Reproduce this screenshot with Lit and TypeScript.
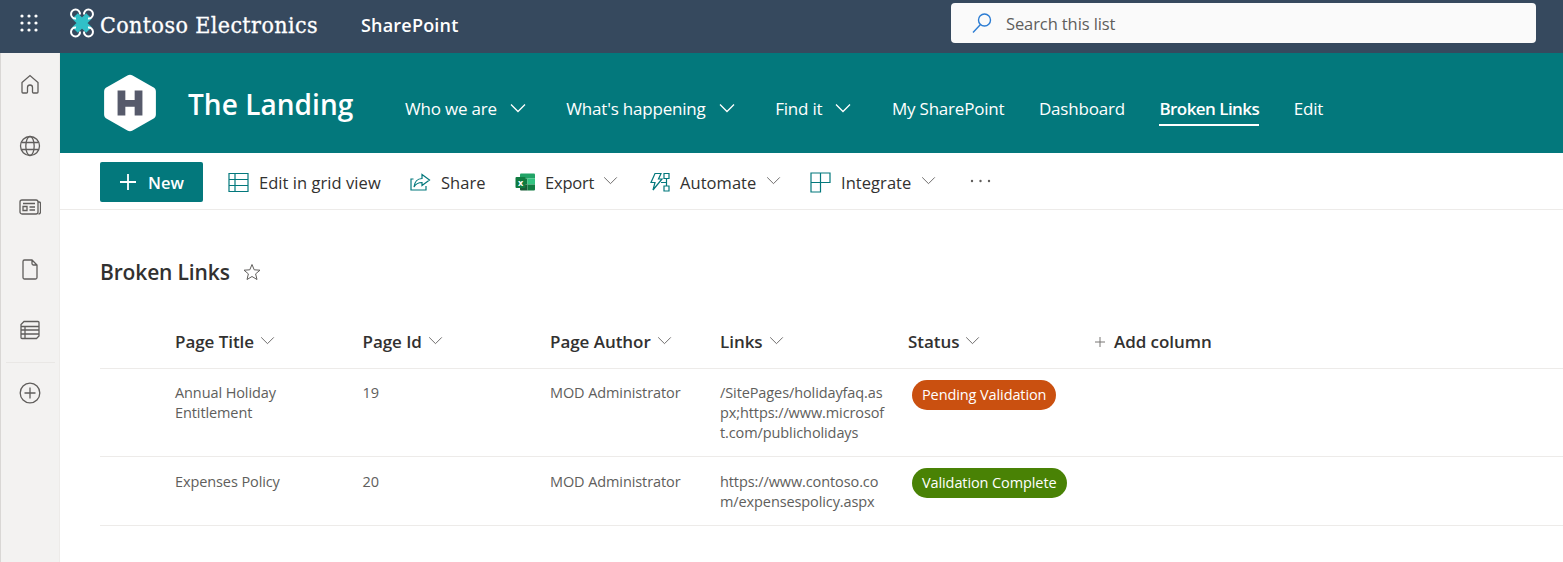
import { LitElement, css, html, svg } from 'lit';
import { customElement } from 'lit/decorators.js';

const chevron = html`<svg class="chev" viewBox="0 0 16 10"><path d="M1 1.5l7 7 7-7" fill="none" stroke="currentColor" stroke-width="1"/></svg>`;

const railIcons = [
  svg`<path d="M3 9.5L11 2.5l8 7V19a1 1 0 0 1-1 1h-3.5a1 1 0 0 1-1-1v-4.500a2.500 2.500 0 0 0-5 0V19a1 1 0 0 1-1 1H4a1 1 0 0 1-1-1z"/>`,
  svg`<circle cx="11" cy="11" r="9.500"/><ellipse cx="11" cy="11" rx="4.200" ry="9.500"/><path d="M2.400 7.500h17.200M2.400 14.500h17.200"/>`,
  svg`<rect x="1" y="4" width="18" height="14" rx="2"/><path d="M19 6h1a1.500 1.500 0 0 1 1.500 1.500V16a2 2 0 0 1-2 2M4 7.500h12M4 10.500h4v4H4zM10.500 11H16M10.500 14H16"/>`,
  svg`<path d="M5.500 2h7.500l5 5v12.500a1.500 1.500 0 0 1-1.500 1.500h-11A1.500 1.500 0 0 1 4 19.500V3.500A1.500 1.500 0 0 1 5.500 2zM13 2v3.500A1.500 1.500 0 0 0 14.500 7H18"/>`,
  svg`<path d="M5 2.500h14a1 1 0 0 1 1 1V17l-2.500 2.500H3a1 1 0 0 1-1-1V5.500zM2 7.500h18M2 11h18M2 15h18M6 7.500v12"/>`,
];

const table = [
  { title: 'Annual Holiday Entitlement', id: '19', author: 'MOD Administrator', links: '/SitePages/holidayfaq.aspx;https://www.microsoft.com/publicholidays', status: 'Pending Validation', tone: 'pending' },
  { title: 'Expenses Policy', id: '20', author: 'MOD Administrator', links: 'https://www.contoso.com/expensespolicy.aspx', status: 'Validation Complete', tone: 'complete' },
];

@customElement('app-root')
export class AppRoot extends LitElement {
  static styles = css`
    :host {
      display: block;
      width: 1563px;
      height: 562px;
      overflow: hidden;
      background: #fff;
      font-family: 'Open Sans', 'Noto Sans', sans-serif;
      color: #323130;
    }
    svg { display: block; flex: none; }
    .suite {
      height: 53px;
      box-sizing: border-box;
      padding-bottom: 7px;
      background: #36495e;
      display: flex;
      align-items: center;
      color: #fff;
    }
    .waffle { width: 18px; height: 18px; margin-left: 20px; fill: #fff; }
    .drone { width: 28px; height: 32px; margin-left: 30px; }
    .brand {
      font-family: 'DejaVu Serif Condensed', 'DejaVu Serif', serif;
      font-size: 23px;
      letter-spacing: 0.4px;
      margin: 3px 0 0 4px;
      width: 261px;
      white-space: nowrap;
      -webkit-text-stroke: 0.3px #fff;
    }
    .app { font-size: 18px; font-weight: 600; letter-spacing: 0.2px; width: 590px; margin-top: 3px; }
    .search {
      width: 585px;
      height: 40px;
      box-sizing: border-box;
      background: #fafafa;
      border-radius: 4px;
      display: flex;
      align-items: center;
      padding-left: 20px;
      gap: 13px;
      font-size: 16.5px;
      letter-spacing: -0.1px;
      color: #605e5c;
    }
    .search svg { width: 22px; height: 22px; }
    .body { display: flex; height: 509px; }
    .rail {
      width: 60px;
      box-sizing: border-box;
      background: #f3f2f1;
      border-left: 1px solid #d9d7d5;
      border-right: 1px solid #edebe9;
      display: flex;
      flex-direction: column;
      align-items: center;
      padding-top: 20px;
      flex: none;
    }
    .rail-item { height: 61.500px; }
    .rail-item svg, .rail-add svg {
      width: 22px;
      height: 22px;
      fill: none;
      stroke: #605e5c;
      stroke-width: 1.300;
    }
    .rail-sep { width: 49px; height: 1px; background: #e9e7e5; margin-top: -19px; }
    .rail-add { margin-top: 19px; }
    .main { flex: 1; min-width: 0; }
    .site {
      height: 100px;
      background: #03787c;
      color: #fff;
      display: flex;
      align-items: center;
      padding-left: 44px;
    }
    .hex { width: 52px; height: 58px; }
    .site-title {
      font-size: 28px;
      font-weight: 600;
      margin: 2px 0 0 32px;
      width: 217px;
      letter-spacing: 0.05px;
      white-space: nowrap;
    }
    .nav { display: flex; align-items: center; gap: 34.500px; font-size: 17px; letter-spacing: -0.2px; margin-top: 10px; }
    .nav-item { display: flex; align-items: center; gap: 12px; height: 36px; white-space: nowrap; box-sizing: border-box; }
    .nav-item .chev { width: 18px; height: 10px; margin-right: 5px; }
    .nav-item .chev path { stroke-width: 1.300; }
    .nav-item.active { font-weight: 600; letter-spacing: -0.55px; border-bottom: 2px solid #fff; height: 34px; margin-top: 2px; }
    .commands {
      height: 57px;
      box-sizing: border-box;
      border-bottom: 1px solid #edebe9;
      display: flex;
      align-items: center;
      padding-left: 40px;
      padding-top: 2px;
      font-size: 16.5px;
      letter-spacing: 0.05px;
    }
    .new {
      width: 103px;
      height: 40px;
      background: #03787c;
      border-radius: 2px;
      color: #fff;
      font-weight: 600;
      display: flex;
      align-items: center;
      gap: 11px;
      padding-left: 19px;
      box-sizing: border-box;
      margin-right: 25px;
    }
    .new svg { width: 18px; height: 18px; }
    .cmd { display: flex; align-items: center; white-space: nowrap; }
    .cmd .chev { width: 15px; height: 9px; color: #605e5c; margin-left: 10px; margin-top: -3px; }
    .cmd .ico { width: 21px; height: 21px; fill: none; stroke: #03787c; stroke-width: 1.200; margin-right: 10px; }
    .grid-cmd { width: 182px; }
    .share-cmd { width: 105px; }
    .export-cmd { width: 134px; letter-spacing: -0.2px; }
    .export-cmd .ico { margin-right: 9px; }
    .export-cmd .chev { margin-left: 9px; }
    .auto-cmd { width: 161px; }
    .int-cmd { width: 160px; }
    .more { width: 21px; height: 4px; fill: #605e5c; margin-top: -2px; }
    .heading {
      display: flex;
      align-items: center;
      margin: 47px 0 0 40px;
      height: 30px;
      font-size: 21px;
      font-weight: 600;
      letter-spacing: -0.15px;
      gap: 13px;
    }
    .heading svg { width: 18px; height: 18px; fill: none; stroke: #605e5c; }
    .table { margin: 30px 0 0 40px; }
    .head, .row {
      display: grid;
      grid-template-columns: 75px 187.500px 187.500px 170px 188px 187px 1fr;
      border-bottom: 1px solid #edebe9;
    }
    .head {
      height: 52px;
      padding-bottom: 2px;
      align-items: center;
      font-size: 17px;
      font-weight: 600;
      letter-spacing: -0.05px;
      color: #323130;
      box-sizing: border-box;
    }
    .head > div { display: flex; align-items: center; gap: 6px; white-space: nowrap; }
    .head .chev { width: 15px; height: 9px; color: #605e5c; margin-top: -3px; }
    .head .add { gap: 9px; }
    .add svg { width: 10px; height: 10px; stroke: #797775; fill: none; }
    .row { font-size: 14.5px; line-height: 20px; color: #605e5c; padding: 14px 0 13px; letter-spacing: -0.1px; }
    .row:last-child { padding: 15px 0 13px; }
    .row:last-child .pill { margin-top: -4px; }
    .row .title { padding-right: 60px; }
    .row .links { word-break: break-all; padding-right: 22px; }
    .pill {
      display: inline-block;
      height: 30px;
      line-height: 30px;
      border-radius: 15px;
      padding: 0 10px;
      color: #fff;
      white-space: nowrap;
      margin: -3px 0 0 4px;
      vertical-align: top;
    }
    .pending { background: #ca5010; }
    .complete { background: #498205; }
  `;

  render() {
    return html`
      <div class="suite">
        <svg class="waffle" viewBox="0 0 18 18">
          ${[2, 9, 16].flatMap(y => [2, 9, 16].map(x => svg`<circle cx=${x} cy=${y} r="1.600"/>`))}
        </svg>
        <svg class="drone" viewBox="0 0 28 32">
          <path d="M7 9l14 14M21 9L7 23" stroke="#30c0c8" stroke-width="8" fill="none"/>
          <g fill="none" stroke="#fff" stroke-width="2">
            <path d="M8 11.500A4.500 4.500 0 1 1 12 7.500M20 11.500A4.500 4.500 0 1 0 16 7.500M8 20.500A4.500 4.500 0 1 0 12 24.500M20 20.500A4.500 4.500 0 1 1 16 24.500"/>
          </g>
        </svg>
        <div class="brand">Contoso Electronics</div>
        <div class="app">SharePoint</div>
        <div class="search">
          <svg viewBox="0 0 22 22" fill="none" stroke="#2b7cd3" stroke-width="1.400">
            <circle cx="13.500" cy="8" r="6"/><path d="M9.500 12.500L2 20.500"/>
          </svg>
          Search this list
        </div>
      </div>
      <div class="body">
        <div class="rail">
          ${railIcons.map(icon => html`<div class="rail-item"><svg viewBox="0 0 22 22">${icon}</svg></div>`)}
          <div class="rail-sep"></div>
          <div class="rail-add">
            <svg viewBox="0 0 22 22"><circle cx="11" cy="11" r="9.800"/><path d="M11 5.500v11M5.500 11h11"/></svg>
          </div>
        </div>
        <div class="main">
          <div class="site">
            <svg class="hex" viewBox="2 2 50 56">
              <path d="M24.500 3.500a5 5 0 0 1 5 0l19.500 11a5 5 0 0 1 3 4.500v22a5 5 0 0 1-3 4.500l-19.500 11a5 5 0 0 1-5 0L5 45.500A5 5 0 0 1 2 41V19a5 5 0 0 1 3-4.500z" fill="#fff"/>
              <path d="M15 18h7.500v9h9v-9H39v24h-7.500V33.500h-9V42H15z" fill="#565a6b"/>
            </svg>
            <div class="site-title">The Landing</div>
            <div class="nav">
              <div class="nav-item">Who we are ${chevron}</div>
              <div class="nav-item">What's happening ${chevron}</div>
              <div class="nav-item">Find it ${chevron}</div>
              <div class="nav-item">My SharePoint</div>
              <div class="nav-item">Dashboard</div>
              <div class="nav-item active">Broken Links</div>
              <div class="nav-item">Edit</div>
            </div>
          </div>
          <div class="commands">
            <div class="new">
              <svg viewBox="0 0 18 18" stroke="#fff" stroke-width="1.800"><path d="M9 1v16M1 9h16"/></svg>
              New
            </div>
            <div class="cmd grid-cmd">
              <svg class="ico" viewBox="0 0 21 21"><path d="M1 1.500h19v18H1zM7 1.500v18M1 7.500h19M1 13.500h19"/></svg>
              Edit in grid view
            </div>
            <div class="cmd share-cmd">
              <svg class="ico" viewBox="0 0 21 21"><path d="M3.500 7H1v11h15v-4M12 2.500l7.500 5.500-7.500 5.500V10.500c-3.500 0-6 1-8 4.500 .5-5 3.500-8.500 8-8.500z"/></svg>
              Share
            </div>
            <div class="cmd export-cmd">
              <svg class="ico" viewBox="0 0 21 21" style="stroke:none">
                <path d="M6 1.500h13a1 1 0 0 1 1 1v4H5v-4a1 1 0 0 1 1-1z" fill="#21a366"/>
                <path d="M5 6.500h7.500v6H5z" fill="#107c41"/><path d="M12.500 6.500H20v6h-7.500z" fill="#33c481"/>
                <path d="M5 12.500h7.500v6H6a1 1 0 0 1-1-1z" fill="#185c37"/><path d="M12.500 12.500H20v5a1 1 0 0 1-1 1h-6.500z" fill="#107c41"/>
                <rect x="0.500" y="5" width="10" height="11" rx="1" fill="#0f7b40"/>
                <text x="5.500" y="13.500" text-anchor="middle" font-size="9" font-weight="700" fill="#fff" font-family="Open Sans">x</text>
              </svg>
              Export ${chevron}
            </div>
            <div class="cmd auto-cmd">
              <svg class="ico" viewBox="0 0 21 21"><path d="M6 1.500h6L9.500 7H13L4 18l2-7.500H2zM15 1.500h5v5h-5zM15 14h5v5h-5zM17.500 6.500V14M12 10.500h5.500"/></svg>
              Automate ${chevron}
            </div>
            <div class="cmd int-cmd">
              <svg class="ico" viewBox="0 0 21 21"><path d="M1 1v19h9.500V10.500H20V1zM10.500 1v9.500M1 10.500h9.500"/></svg>
              Integrate ${chevron}
            </div>
            <svg class="more" viewBox="0 0 21 4"><circle cx="2" cy="2" r="1.200"/><circle cx="10.500" cy="2" r="1.200"/><circle cx="19" cy="2" r="1.200"/></svg>
          </div>
          <div class="heading">
            Broken Links
            <svg viewBox="0 0 18 18"><path d="M9 1.500l2.200 5.300 5.800.4-4.400 3.700 1.400 5.600L9 13.500l-5 3 1.400-5.600L1 7.200l5.800-.4z"/></svg>
          </div>
          <div class="table">
            <div class="head">
              <span></span>
              <div>Page Title ${chevron}</div>
              <div>Page Id ${chevron}</div>
              <div>Page Author ${chevron}</div>
              <div>Links ${chevron}</div>
              <div>Status ${chevron}</div>
              <div class="add"><svg viewBox="0 0 10 10"><path d="M5 0v10M0 5h10"/></svg>Add column</div>
            </div>
            ${table.map(row => html`
              <div class="row">
                <span></span>
                <div class="title">${row.title}</div>
                <div>${row.id}</div>
                <div>${row.author}</div>
                <div class="links">${row.links}</div>
                <div><span class="pill ${row.tone}">${row.status}</span></div>
              </div>
            `)}
          </div>
        </div>
      </div>
    `;
  }
}
